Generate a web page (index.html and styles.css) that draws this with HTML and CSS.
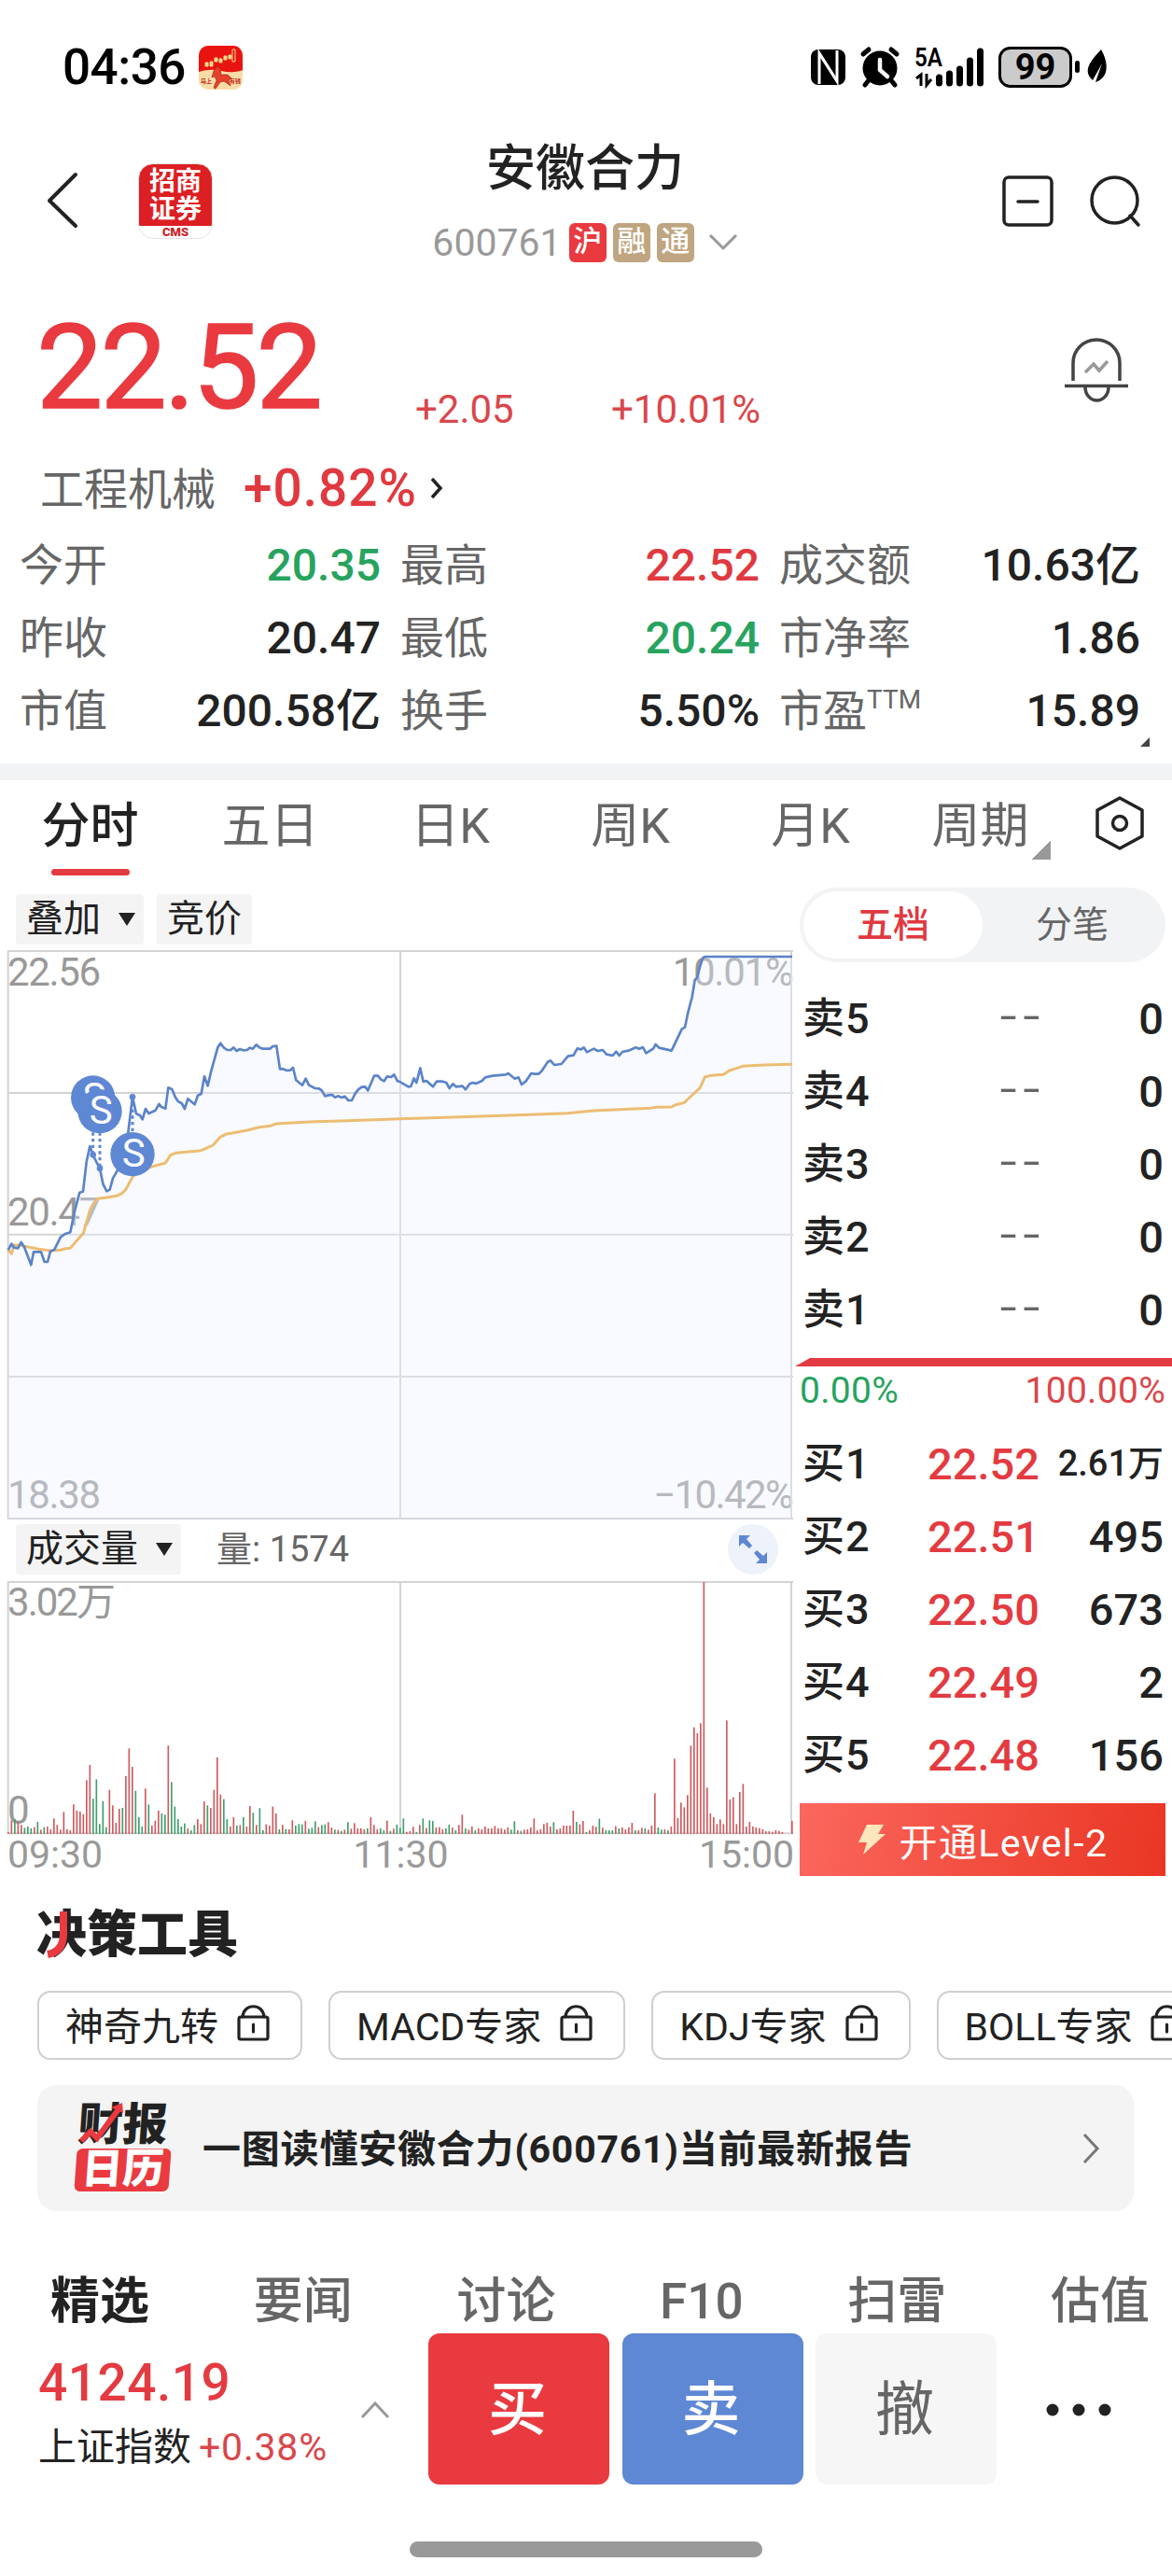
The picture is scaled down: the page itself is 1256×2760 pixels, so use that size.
FILE: index.html
```html
<!DOCTYPE html>
<html lang="zh-CN">
<head>
  <meta charset="UTF-8">
  <title>安徽合力 600761</title>
  <link rel="stylesheet" href="styles.css">
</head>
<body>
  <!-- Status bar -->
  <div class="status">
    <span class="clock">04:36</span>
    <svg class="promo" width="48" height="48" viewBox="0 0 48 48">
      <defs><clipPath id="promo-clip"><rect width="47" height="47" rx="10"/></clipPath></defs>
      <g clip-path="url(#promo-clip)">
        <rect width="48" height="48" fill="#f8dca6"/>
        <path d="M0 0H48V26Q36 30 24 27Q12 24 0 28Z" fill="#e9140f"/>
        <g fill="#f7d98c" stroke="#f7d98c" stroke-width="1">
          <path d="M7 18h3v4H7zM12 17h3v5h-3zM17 13h3v4h-3zM22 14h3v4h-3zM27 11h3v4h-3zM32 10h3v4h-3z"/>
          <path d="M36 4h3v13h-3z" fill="#e9140f"/>
        </g>
        <path d="M16 27l4-5 3 3 1 6 7 0 4 4-3 2 2 6-4-3-3-2-4 1-5 7-2-1 3-8-2-4-3 1z" fill="#e5402a" stroke="#a52a1c" stroke-width=".7"/>
        <text x="2" y="40" font-size="6" font-weight="700" fill="#c3241a">马上</text>
        <text x="33" y="40" font-size="6" font-weight="700" fill="#c3241a">有钱</text>
      </g>
    </svg>
    <svg class="status-icons" width="320" height="46" viewBox="869 50 320 46">
      <rect x="869" y="53" width="37" height="38" rx="8"/>
      <path d="M878 90V57L894 82M897 54V87L881 62" fill="none" stroke="#fff" stroke-width="3"/>
      <circle cx="943" cy="73" r="18.5"/>
      <path d="M925 58l6-5M961 58l-6-5M931 86l-4 5M955 86l4 5" stroke="#000" stroke-width="5" stroke-linecap="round"/>
      <path d="M943 64v11l8 7" fill="none" stroke="#fff" stroke-width="4.5" stroke-linecap="round"/>
      <text x="980" y="71" font-size="27" font-weight="600" textLength="30" lengthAdjust="spacingAndGlyphs">5A</text>
      <path d="M982 84l5-4v12M993 79v12l5-6" fill="none" stroke="#000" stroke-width="3"/>
      <path d="M1006.500 83v6M1017.500 79v10M1028.500 74v15M1039.500 65v24M1050.500 55v34" stroke="#000" stroke-width="7" stroke-linecap="round"/>
      <rect x="1071.500" y="51.500" width="76" height="41" rx="11" fill="#cbcbcb" stroke="#000" stroke-width="3"/>
      <text x="1109.500" y="85" font-size="38" font-weight="700" text-anchor="middle">99</text>
      <rect x="1152" y="65" width="5" height="13" rx="2.500"/>
      <path d="M1180 53C1188 67 1189 83 1174 88L1181 68L1171 86C1160 76 1168 66 1180 53Z"/>
    </svg>
  </div>

  <!-- Title bar -->
  <header class="topbar">
    <svg class="back" width="36" height="62" viewBox="0 0 36 62"><path d="M32 3L4 31l28 27" fill="none" stroke="#222" stroke-width="4" stroke-linecap="round" stroke-linejoin="round"/></svg>
    <div class="broker">
      <span>招商</span>
      <span>证券</span>
      <b>CMS</b>
    </div>
    <div class="stock">
      <h1>安徽合力</h1>
      <div class="stock-code">
        <span>600761</span>
        <i class="badge red">沪</i>
        <i class="badge">融</i>
        <i class="badge">通</i>
        <svg width="32" height="20" viewBox="0 0 32 20"><path d="M2 2l14 14L30 2" fill="none" stroke="#999" stroke-width="3"/></svg>
      </div>
    </div>
    <svg class="minus" width="56" height="56" viewBox="0 0 56 56" fill="none" stroke="#222" stroke-width="3.500" stroke-linecap="round"><rect x="2" y="2" width="51" height="51" rx="5"/><path d="M17 28h21"/></svg>
    <svg class="search" width="56" height="56" viewBox="0 0 56 56" fill="none" stroke="#222" stroke-width="3.500" stroke-linecap="round"><circle cx="26.500" cy="26.500" r="24.500"/><path d="M43 43l9 10"/></svg>
  </header>

  <!-- Price -->
  <section class="price">
    <span class="last">22.52</span>
    <span class="change">+2.05</span>
    <span class="change">+10.01%</span>
    <svg class="bell" width="68" height="72" viewBox="0 0 68 72" fill="none" stroke="#444" stroke-width="3.500">
      <path d="M9 47V28a25 25 0 0 1 50 0v19M0 52.500h68"/>
      <path d="M22 54a12.500 14 0 0 0 25 0"/>
      <path d="M22 38l9-9 6 7 9-10" stroke="#999"/>
    </svg>
  </section>
  <div class="sector">
    <span>工程机械</span>
    <b>+0.82%</b>
    <svg width="14" height="24" viewBox="0 0 14 24"><path d="M2 2l9 10-9 10" fill="none" stroke="#222" stroke-width="3.500"/></svg>
  </div>
  <section class="quotes">
    <div class="quote"><span>今开</span><b class="down">20.35</b></div>
    <div class="quote"><span>最高</span><b class="up">22.52</b></div>
    <div class="quote"><span>成交额</span><b>10.63亿</b></div>
    <div class="quote"><span>昨收</span><b>20.47</b></div>
    <div class="quote"><span>最低</span><b class="down">20.24</b></div>
    <div class="quote"><span>市净率</span><b>1.86</b></div>
    <div class="quote"><span>市值</span><b>200.58亿</b></div>
    <div class="quote"><span>换手</span><b>5.50%</b></div>
    <div class="quote"><span>市盈<sup>TTM</sup></span><b>15.89</b></div>
    <i class="more-corner"></i>
  </section>

  <!-- Period tabs -->
  <nav class="periods">
    <span class="active">分时</span>
    <span>五日</span>
    <span>日K</span>
    <span>周K</span>
    <span>月K</span>
    <span class="drop">周期</span>
    <svg width="52" height="58" viewBox="0 0 52 58" fill="none" stroke="#222" stroke-width="3.500" stroke-linejoin="round"><path d="M26 2L50 15V43L26 56L2 43V15Z"/><circle cx="26" cy="29" r="7.500"/></svg>
  </nav>

  <main class="market">
    <div class="charts">
      <div class="tools">
        <span class="tag">叠加<i class="caret"></i></span>
        <span class="tag">竞价</span>
      </div>
      <svg class="trend" width="852" height="612" viewBox="0 51 2556 1836">
        <g class="axis">
          <text x="24" y="168" textLength="300">22.56</text>
          <text x="24" y="938" textLength="300">20.47</text>
          <text x="24" y="1848" textLength="300">18.38</text>
          <text x="2162" y="168" textLength="390">10.01%</text>
          <text x="2100" y="1848" textLength="452">−10.42%</text>
        </g>
        <path class="grid" d="M24 57H2550M24 513H2550M24 968H2550M24 1425H2550M24 1881H2550M26 57V1881M1287 57V1881M2544 57V1881"/>
        <path class="area" id="area"/>
        <polyline class="avg" id="avg"/>
        <polyline class="line" id="line"/>
        <g class="marks">
          <path d="M299 640V712M321 640V755M426 526V650"/>
          <circle cx="299" cy="712" r="10"/><circle cx="321" cy="755" r="10"/><circle cx="426" cy="526" r="10"/>
          <circle cx="299" cy="528" r="71"/><text x="303" y="569">S</text>
          <circle cx="321" cy="572" r="71"/><text x="325" y="611">S</text>
          <circle cx="426" cy="710" r="71"/><text x="430" y="749">S</text>
        </g>
      </svg>
      <div class="volume-head">
        <span class="tag">成交量<i class="caret"></i></span>
        <span class="amount">量: 1574</span>
        <svg width="54" height="54" viewBox="0 0 54 54"><circle cx="27" cy="27" r="27" fill="#edf2fb"/><path d="M12 12h12l-4 4 6 7-3 3-7-6-4 4zM42 42H30l4-4-6-7 3-3 7 6 4-4z" fill="#5e87d4"/></svg>
      </div>
      <svg class="volume" width="852" height="274" viewBox="0 0 2556 822">
        <g class="axis">
          <text x="24" y="114" textLength="348">3.02万</text>
          <text x="24" y="783">0</text>
        </g>
        <path class="grid" d="M24 6H2550M24 814H2550M26 6V814M1287 6V814M2544 6V814"/>
        <g id="bars"></g>
      </svg>
      <div class="hours"><span>09:30</span><span>11:30</span><span>15:00</span></div>
    </div>

    <!-- Order book -->
    <aside class="book">
      <div class="switch"><span class="on">五档</span><span>分笔</span></div>
      <div class="row"><span>卖5</span><em>--</em><b>0</b></div>
      <div class="row"><span>卖4</span><em>--</em><b>0</b></div>
      <div class="row"><span>卖3</span><em>--</em><b>0</b></div>
      <div class="row"><span>卖2</span><em>--</em><b>0</b></div>
      <div class="row"><span>卖1</span><em>--</em><b>0</b></div>
      <div class="ratio-bar"></div>
      <div class="ratio"><span class="down">0.00%</span><span class="change-color">100.00%</span></div>
      <div class="row"><span>买1</span><b class="bid">22.52</b><b class="small">2.61万</b></div>
      <div class="row"><span>买2</span><b class="bid">22.51</b><b>495</b></div>
      <div class="row"><span>买3</span><b class="bid">22.50</b><b>673</b></div>
      <div class="row"><span>买4</span><b class="bid">22.49</b><b>2</b></div>
      <div class="row"><span>买5</span><b class="bid">22.48</b><b>156</b></div>
      <div class="level2">
        <svg width="32" height="34" viewBox="0 0 32 34"><path d="M10 1h18l-6 10h8L6 33l4-13H1z" fill="#ffe7bd"/></svg>
        开通Level-2
      </div>
    </aside>
  </main>

  <!-- Decision tools -->
  <h2 class="decision">决策工具
    <svg width="28" height="52" viewBox="0 0 28 52"><path d="M18 0V24Q18 43 1 46" fill="none" stroke="#e93a40" stroke-width="8"/></svg>
  </h2>
  <div class="chips">
    <span class="chip">神奇九转<svg class="lock" width="36" height="40" viewBox="0 0 36 40"><use href="#lock"/></svg></span>
    <span class="chip">MACD专家<svg class="lock" width="36" height="40" viewBox="0 0 36 40"><use href="#lock"/></svg></span>
    <span class="chip">KDJ专家<svg class="lock" width="36" height="40" viewBox="0 0 36 40"><use href="#lock"/></svg></span>
    <span class="chip">BOLL专家<svg class="lock" width="36" height="40" viewBox="0 0 36 40"><use href="#lock"/></svg></span>
  </div>
  <svg class="defs" width="0" height="0">
    <symbol id="lock" viewBox="0 0 36 40"><g fill="none" stroke="#222" stroke-width="3.200" stroke-linecap="round"><rect x="2" y="13" width="31" height="24" rx="2"/><path d="M6 13C7 -2 28 -2 29 13M17.500 21v8"/></g></symbol>
  </svg>

  <div class="report">
    <div class="report-logo">
      <b>财报</b>
      <b class="boxed">日历</b>
      <svg width="50" height="44" viewBox="0 0 50 44"><path d="M3 41L13 31L20 38L43 7" fill="none" stroke="#e93a40" stroke-width="6"/><path d="M35 5L47 0L48 11Z" fill="#e93a40"/></svg>
    </div>
    <span>一图读懂安徽合力(600761)当前最新报告</span>
    <svg width="20" height="34" viewBox="0 0 20 34"><path d="M3 2l14 15L3 32" fill="none" stroke="#777" stroke-width="3"/></svg>
  </div>

  <nav class="sections">
    <span class="active">精选</span>
    <span>要闻</span>
    <span>讨论</span>
    <span>F10</span>
    <span>扫雷</span>
    <span>估值</span>
  </nav>

  <footer class="trade">
    <div class="index">
      <b>4124.19</b>
      <div><span>上证指数</span><em>+0.38%</em></div>
    </div>
    <svg class="expand" width="32" height="20" viewBox="0 0 32 20"><path d="M2 18L16 3l14 15" fill="none" stroke="#999" stroke-width="3"/></svg>
    <button class="buy">买</button>
    <button class="sell">卖</button>
    <button class="cancel">撤</button>
    <svg class="dots" width="70" height="14" viewBox="0 0 70 14" fill="#222"><circle cx="7" cy="7" r="6.500"/><circle cx="35" cy="7" r="6.500"/><circle cx="63" cy="7" r="6.500"/></svg>
  </footer>
  <div class="home-bar"></div>

  <script src="script.js"></script>
</body>
</html>
```
FILE: styles.css
```css
* {
  box-sizing: border-box;
}
body {
  margin: 0;
  width: 1256px;
  height: 2760px;
  overflow: hidden;
  background: #fff;
  color: #222;
  font-family: Roboto, "Noto Sans CJK SC", sans-serif;
}
svg {
  display: block;
  flex: none;
}
i, em {
  font-style: normal;
}
h1, h2 {
  margin: 0;
}
.up {
  color: #e0393f;
}
.down {
  color: #27a35f;
}

/* status bar */
.status {
  display: flex;
  height: 145px;
  padding: 49px 0 0 67px;
  color: #000;
}
.clock {
  width: 146px;
  font-size: 53px;
  font-weight: 500;
  letter-spacing: -.5px;
  line-height: 47px;
}
.status-icons {
  margin: 1px 0 0 608px;
  overflow: visible;
}

/* title bar */
.topbar {
  display: flex;
  height: 155px;
  padding-left: 49px;
}
.back {
  margin-top: 39px;
}
.broker {
  width: 80px;
  height: 81px;
  margin: 30px 0 0 63px;
  padding-top: 4px;
  border: 1px solid #e3e3e3;
  border-radius: 16px;
  background: linear-gradient(#dc1f22 66px, #fff 66px);
  color: #fff;
  font-size: 28px;
  font-weight: 700;
  text-align: center;
}
.broker span {
  display: block;
  line-height: 30px;
}
.broker b {
  display: block;
  color: #cf2228;
  font-size: 13px;
  line-height: 17px;
}
.stock {
  width: 560px;
  margin-left: 119px;
  text-align: center;
}
.stock h1 {
  font-size: 53px;
  font-weight: 500;
  line-height: 72px;
}
.stock-code {
  display: flex;
  align-items: center;
  justify-content: center;
  gap: 7px;
  height: 44px;
  margin-top: 21px;
  color: #999;
  font-size: 41px;
}
.stock-code span {
  margin-right: 1px;
}
.stock-code svg {
  margin-left: 8px;
}
.badge {
  width: 40px;
  height: 42px;
  border-radius: 6px;
  background: #bfa580;
  color: #fff;
  font-size: 31px;
  font-weight: 500;
  line-height: 40px;
}
.badge.red {
  background: #e93a40;
}
.minus {
  margin: 43px 0 0 167px;
}
.search {
  margin: 43px 0 0 38px;
}

/* price */
.price {
  display: flex;
  align-items: flex-start;
  height: 180px;
  padding: 0 47px 0 39px;
  color: #e93a40;
}
.last {
  width: 406px;
  font-size: 127px;
  letter-spacing: -3px;
  line-height: 188px;
  -webkit-text-stroke: 1.5px #e93a40;
}
.change {
  width: 210px;
  margin-top: 114px;
  color: #d9474b;
  font-size: 42px;
  line-height: 50px;
}
.bell {
  margin: 61px 0 0 auto;
}
.sector {
  display: flex;
  align-items: center;
  height: 86px;
  padding-left: 43px;
  color: #666;
  font-size: 47px;
}
.sector span {
  margin-top: -6px;
}
.sector b {
  margin: 0 14px 0 30px;
  color: #e0393f;
  font-size: 55px;
  font-weight: 500;
  letter-spacing: 1px;
}
.quotes {
  position: relative;
  display: grid;
  grid-template-columns: 387px 385px 387px;
  grid-auto-rows: 78px;
  align-content: start;
  column-gap: 21px;
  height: 252px;
  padding-left: 21px;
}
.quote {
  display: flex;
  justify-content: space-between;
  font-size: 47px;
  line-height: 79px;
}
.quote span {
  color: #666;
  white-space: nowrap;
}
.quote b {
  font-size: 48px;
  font-weight: 500;
}
.quote sup {
  font-size: 28px;
  line-height: 0;
  vertical-align: 19px;
}
.more-corner {
  position: absolute;
  right: 24px;
  top: 224px;
  border: 5px solid;
  border-color: transparent #444 #444 transparent;
}

/* period tabs */
.periods {
  display: grid;
  grid-template-columns: repeat(6, 193px) 98px;
  height: 122px;
  border-top: 18px solid #f2f3f5;
  color: #666;
  font-size: 52px;
  line-height: 100px;
  text-align: center;
}
.periods .active {
  color: #222;
  font-weight: 500;
}
.periods .active::after {
  content: "";
  display: block;
  width: 84px;
  height: 7px;
  margin: -5px auto 0;
  border-radius: 4px;
  background: #e33b41;
}
.periods .drop {
  padding-right: 22px;
  background: linear-gradient(135deg, transparent 50%, #999 50%) 141px 65px / 20px 20px no-repeat;
}
.periods svg {
  margin: 17px 0 0 16px;
}

/* charts */
.market {
  display: flex;
  height: 1080px;
}
.charts {
  width: 852px;
  padding-top: 18px;
}
.tools {
  display: flex;
  gap: 14px;
  height: 59px;
  padding-left: 17px;
}
.tag {
  display: flex;
  align-items: center;
  height: 54px;
  padding: 0 11px;
  border-radius: 4px;
  background: #f4f4f4;
  font-size: 40px;
  line-height: 54px;
}
.caret {
  margin-left: 19px;
  margin-right: -2px;
  border: 9.5px solid transparent;
  border-top: 14px solid #222;
  border-bottom: 0;
}
.axis {
  fill: #999;
  font-size: 126px;
}
.grid {
  fill: none;
  stroke: #d3d3d6;
  stroke-width: 6;
}
.area {
  fill: #ecf0ff;
  fill-opacity: .36;
}
.avg, .line {
  fill: none;
  stroke: #ecbd72;
  stroke-width: 9;
  stroke-linejoin: round;
}
.line {
  stroke: #5b83c9;
  stroke-width: 8;
}
.marks {
  fill: #5e87d4;
  font-size: 126px;
  text-anchor: middle;
}
.marks path {
  stroke: #5e87d4;
  stroke-width: 9;
  stroke-dasharray: 10 10;
}
.marks text {
  fill: #fff;
}
.volume-head {
  display: flex;
  height: 64px;
  padding: 4px 0 0 17px;
}
.volume-head svg {
  margin-left: auto;
  margin-right: 18px;
}
.amount {
  margin-left: 38px;
  color: #666;
  font-size: 38px;
  line-height: 54px;
}
.rise {
  fill: #cf5b5f;
}
.fall {
  fill: #3fa06c;
}
.hours {
  display: flex;
  justify-content: space-between;
  padding: 0 1px 0 8px;
  color: #999;
  font-size: 41px;
  line-height: 40px;
}

/* order book */
.book {
  width: 404px;
  padding: 11px 7px 0 5px;
}
.switch {
  display: flex;
  height: 80px;
  margin-bottom: 21px;
  padding: 4px;
  border-radius: 40px;
  background: #f2f3f5;
  color: #666;
  font-size: 39px;
  line-height: 72px;
  text-align: center;
}
.switch span {
  flex: 1;
}
.switch .on {
  border-radius: 36px;
  background: #fff;
  color: #e0393f;
  font-weight: 500;
}
.row {
  display: flex;
  height: 78px;
  padding: 0 2px 0 3px;
  font-size: 47px;
  line-height: 79px;
}
.row span {
  width: 103px;
  font-size: 45px;
  letter-spacing: 1px;
}
.row span, .row b {
  font-weight: 500;
}
.row b {
  flex: 1;
  text-align: right;
}
.row em {
  width: 158px;
  color: #666;
  font-size: 66px;
  font-weight: 300;
  letter-spacing: 6px;
  text-align: right;
  line-height: 74px;
}
.row .bid {
  flex: none;
  width: 151px;
  color: #e33b41;
}
.row .small {
  font-size: 38px;
}
.ratio-bar {
  height: 9px;
  margin: 13px -7px 0 -5px;
  background: #e33b41;
  clip-path: polygon(16px 0, 100% 0, 100% 100%, 0 100%);
}
.ratio {
  display: flex;
  justify-content: space-between;
  height: 65px;
  font-size: 39px;
  letter-spacing: .3px;
  line-height: 52px;
}
.change-color {
  color: #d9474b;
}
.level2 {
  display: flex;
  align-items: center;
  justify-content: center;
  gap: 13px;
  height: 78px;
  margin-top: 13px;
  background: linear-gradient(100deg, #fb675d, #e93624);
  color: #fff;
  font-size: 41px;
  letter-spacing: 1.4px;
}

/* decision tools */
.decision {
  position: relative;
  height: 113px;
  padding: 24px 0 0 39px;
  font-size: 54px;
  font-weight: 900;
  line-height: 60px;
}
.decision svg {
  position: absolute;
  left: 50px;
  top: 28px;
}
.chips {
  display: flex;
  gap: 28px;
  height: 74px;
  padding-left: 40px;
  overflow: hidden;
}
.chip {
  display: flex;
  flex: none;
  align-items: center;
  height: 74px;
  padding: 0 32px 5px 28px;
  border: 2px solid #cfcfcf;
  border-radius: 14px;
  font-size: 41px;
}
.lock {
  margin-left: 20px;
}
.defs {
  position: absolute;
}
.report {
  display: flex;
  align-items: center;
  width: 1175px;
  height: 135px;
  margin: 27px 0 0 40px;
  padding: 0 36px 0 41px;
  border-radius: 20px;
  background: #f4f4f4;
  font-size: 41px;
  font-weight: 700;
}
.report span {
  margin-top: -6px;
  letter-spacing: .8px;
}
.report > svg {
  margin-left: auto;
}
.report-logo {
  position: relative;
  width: 101px;
  margin-right: 35px;
}
.report-logo b {
  display: block;
  height: 46px;
  font-size: 48px;
  font-weight: 900;
  line-height: 42px;
  text-align: center;
  transform: skewX(-4deg);
}
.report-logo .boxed {
  border-radius: 6px;
  background: #e93a40;
  color: #fff;
  font-size: 44px;
  line-height: 44px;
}
.report-logo svg {
  position: absolute;
  left: 3px;
  top: -3px;
}
.sections {
  display: flex;
  justify-content: space-between;
  height: 131px;
  padding: 63px 24px 0 54px;
  color: #666;
  font-size: 53px;
  font-weight: 500;
  line-height: 69px;
}
.sections .active {
  color: #222;
  font-weight: 700;
}

/* trade bar */
.trade {
  display: flex;
  height: 223px;
  padding-left: 41px;
}
.index {
  width: 346px;
  padding-top: 20px;
}
.index b {
  display: block;
  color: #e33b41;
  font-size: 55px;
  font-weight: 500;
  letter-spacing: .5px;
  line-height: 66px;
}
.index div {
  margin-top: 6px;
  font-size: 41px;
  line-height: 60px;
  white-space: nowrap;
}
.index em {
  margin-left: 8px;
  color: #d9474b;
  letter-spacing: .8px;
}
.expand {
  margin: 72px 41px 0 -1px;
}
.trade button {
  width: 194px;
  height: 162px;
  margin: 0 13.5px 0 0;
  padding: 0 3px 12px 0;
  border: 0;
  border-radius: 12px;
  color: #fff;
  font-family: inherit;
  font-size: 63px;
  font-weight: 500;
}
.trade .buy {
  background: #e93a40;
}
.trade .sell {
  background: #5e87d4;
}
.trade .cancel {
  background: #f6f6f6;
  color: #666;
  font-weight: 400;
}
.dots {
  margin: 75px 0 0 39px;
}
.home-bar {
  width: 378px;
  height: 17px;
  margin: 0 auto;
  border-radius: 9px;
  background: #999;
}
```
FILE: script.js
```js
// Intraday price line, three units per pixel
const price = [
  [26,1018],[37,998],[45,1010],[58,1012],[68,993],[78,1008],[100,1066],[108,1024],[132,1024],[143,1056],
  [153,1056],[162,1022],[174,1018],[195,976],[208,967],[226,961],[240,893],[256,833],[267,830],[278,735],
  [289,684],[299,712],[310,735],[321,755],[331,805],[343,829],[353,824],[363,787],[376,765],[400,700],
  [412,640],[426,526],[438,580],[450,585],[458,598],[468,564],[478,579],[500,569],[511,549],[519,558],
  [532,563],[541,496],[553,501],[564,527],[573,541],[584,546],[594,564],[604,532],[615,541],[626,550],
  [636,521],[647,516],[657,460],[668,490],[679,442],[700,367],[709,353],[720,368],[731,375],[742,375],
  [751,367],[761,378],[771,372],[782,376],[794,375],[803,368],[813,371],[824,358],[834,367],[845,371],
  [868,371],[877,363],[889,362],[900,436],[910,436],[922,441],[933,440],[942,432],[952,472],[972,488],
  [983,467],[993,488],[1013,498],[1026,499],[1035,506],[1045,523],[1057,520],[1068,519],[1077,527],[1088,523],
  [1098,528],[1108,524],[1120,537],[1131,537],[1142,515],[1152,502],[1163,494],[1174,493],[1183,505],[1203,458],
  [1215,458],[1225,470],[1235,475],[1245,460],[1258,462],[1267,454],[1278,475],[1287,478],[1313,493],[1321,492],
  [1331,466],[1339,480],[1351,433],[1361,477],[1371,474],[1392,493],[1404,476],[1423,476],[1435,480],[1445,498],
  [1456,484],[1466,493],[1487,491],[1497,502],[1510,484],[1520,480],[1530,483],[1550,474],[1560,463],[1583,458],
  [1626,454],[1634,450],[1655,467],[1667,463],[1677,486],[1690,476],[1708,450],[1719,452],[1731,452],[1741,443],
  [1761,413],[1770,409],[1782,423],[1805,420],[1826,395],[1844,392],[1856,370],[1868,373],[1877,367],[1887,382],
  [1909,371],[1922,378],[1938,375],[1950,389],[1970,393],[1981,380],[1991,393],[2001,381],[2024,376],[2044,367],
  [2055,371],[2067,366],[2077,385],[2100,371],[2108,357],[2119,368],[2159,377],[2192,308],[2202,302],[2213,250],
  [2225,205],[2234,150],[2241,143],[2251,105],[2259,80],[2266,75],[2547,75]
];
const average = [
  [26,1018],[37,1030],[45,1002],[60,1002],[90,1008],[120,1014],[160,1020],[195,1018],[207,1014],[226,1012],
  [268,964],[290,888],[301,868],[314,853],[345,849],[375,844],[392,836],[404,824],[428,780],[450,765],
  [485,751],[532,738],[548,713],[565,706],[600,703],[647,698],[685,681],[708,655],[725,646],[795,633],
  [830,624],[870,619],[887,612],[940,609],[1013,605],[1120,602],[1287,596],[1480,590],[1728,582],[1826,578],
  [1909,570],[2092,562],[2110,559],[2159,558],[2170,552],[2200,544],[2220,525],[2251,496],[2266,462],[2285,457],
  [2326,454],[2345,441],[2370,433],[2388,427],[2460,423],[2547,421]
];

// Volume per minute, negative when the price fell
const volume = [
  6,44,-48,40,29,-20,-24,-18,22,-39,14,-22,24,15,50,29,14,71,15,12,
  95,75,72,64,173,222,-113,-176,-32,-105,-22,142,92,36,81,-84,186,275,216,-139,
  -54,-24,146,-95,27,43,75,-66,-62,284,-167,-88,-48,-24,-34,18,-12,-29,48,32,
  105,-92,84,142,246,127,-112,-48,24,54,-27,29,-54,24,90,-68,29,-83,-12,31,
  27,88,66,-15,29,-16,15,44,-27,-32,-31,42,-17,-20,-41,22,-29,-31,38,21,
  -14,13,-10,14,-38,17,35,18,18,15,-18,54,29,15,-18,-12,43,-10,17,-30,
  -20,-50,7,9,23,-6,29,-50,19,-44,-42,21,22,15,-18,-30,21,-12,29,62,
  -18,14,24,-12,18,15,24,18,18,26,18,18,14,21,-14,-41,12,-10,14,15,
  21,50,12,15,32,36,24,-38,15,18,27,27,27,75,-39,31,42,-6,12,27,
  23,-49,20,-12,-12,-12,25,-18,21,15,21,36,-12,12,20,-18,14,27,131,-21,
  -14,15,-12,24,242,51,101,86,125,284,343,324,356,810,149,66,54,32,47,32,
  365,111,118,32,135,161,24,39,24,21,19,15,9,9,7,12,10,6,0,0,42
];

document.getElementById("line").setAttribute("points", price.join(" "));
document.getElementById("avg").setAttribute("points", average.join(" "));
document.getElementById("area").setAttribute("d", "M26 1881L" + price.join(" ") + "V1881Z");

const bars = document.getElementById("bars");
volume.forEach((v, i) => {
  const rect = document.createElementNS("http://www.w3.org/2000/svg", "rect");
  const h = Math.abs(v);
  rect.setAttribute("x", 24 + i * 10.5);
  rect.setAttribute("y", 816 - h);
  rect.setAttribute("width", 5);
  rect.setAttribute("height", h);
  rect.setAttribute("class", v < 0 ? "fall" : "rise");
  bars.appendChild(rect);
});
```
